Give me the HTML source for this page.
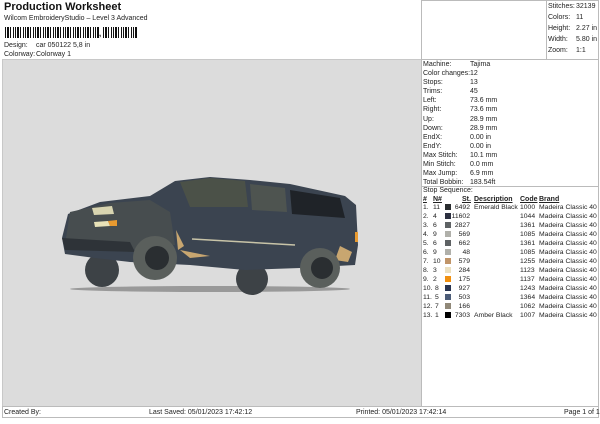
<!DOCTYPE html>
<html><head><meta charset="utf-8"><style>
*{margin:0;padding:0;box-sizing:border-box}
body{width:600px;height:424px;background:#fff;font-family:"Liberation Sans",Arial,sans-serif;font-size:7px;color:#222;position:relative;overflow:hidden}
.a{position:absolute;white-space:nowrap;line-height:9px}
.t{font-weight:bold;font-size:11px;left:4px;top:1px;line-height:13px;color:#111}
.bc{position:absolute;top:27px;height:11px;background:repeating-linear-gradient(90deg,#111 0 1px,#fff 1px 2px,#111 2px 4px,#fff 4px 5px,#111 5px 6px,#fff 6px 8px,#111 8px 9px,#fff 9px 10px)}
.box{position:absolute;border:1px solid #bbb}
.row{position:absolute;left:423px;width:175px;height:9px;line-height:9px;font-size:6.8px}
.row span{position:absolute;white-space:nowrap}
.sw{display:inline-block;width:6px;height:6px;position:absolute;top:1px;left:22px}
</style></head><body>
<div class="a t">Production Worksheet</div>
<div class="a" style="left:4px;top:14px">Wilcom EmbroideryStudio – Level 3 Advanced</div>
<div class="bc" style="left:5px;width:94px"></div>
<div class="a" style="left:99px;top:29px;font-weight:bold;font-size:8px">,</div>
<div class="bc" style="left:103px;width:34px"></div>
<div class="a" style="left:4px;top:41px">Design:</div><div class="a" style="left:36px;top:41px">car 050122 5,8 in</div>
<div class="a" style="left:4px;top:50px">Colorway:</div><div class="a" style="left:36px;top:50px">Colorway 1</div>

<div style="position:absolute;left:2px;top:59px;width:420px;height:348px;background:#dcdcdc;border:1px solid #c8c8c8"></div>
<svg style="position:absolute;left:0;top:0" width="600" height="424">
<ellipse cx="210" cy="289" rx="140" ry="3" fill="#555" opacity=".5"/>
<circle cx="102" cy="270" r="17" fill="#3d4246"/>
<circle cx="252" cy="279" r="16" fill="#3d4246"/>
<path d="M62 238 L68 214 L100 202 L150 196 L175 181 L210 177 L250 180 L290 184 L345 196 L356 205 L358 245 L355 265 L300 268 L245 270 L190 265 L130 262 L95 258 L65 254 Z" fill="#3b4450"/>
<path d="M180 182 L210 178 L245 181 L248 207 L190 207 Z" fill="#4b5148"/>
<path d="M250 184 L285 188 L287 212 L252 210 Z" fill="#4e5450"/>
<path d="M290 190 L340 198 L345 218 L292 214 Z" fill="#1f2328"/>
<path d="M70 212 L110 203 L150 200 L170 212 L175 245 L130 250 L90 245 L66 238 Z" fill="#474d4f"/>
<path d="M92 208 L112 206 L114 214 L94 215 Z" fill="#d8d4b0"/>
<path d="M94 222 L108 221 L110 226 L95 227 Z" fill="#e8e2b8"/>
<path d="M108 221 L117 220 L117 226 L110 226 Z" fill="#e89a30"/>
<path d="M62 238 L130 242 L135 252 L65 250 Z" fill="#2e3338"/>
<path d="M180 250 L210 256 L190 258 Z M176 230 L184 246 L178 250 Z" fill="#c8a670"/>
<path d="M340 246 L352 252 L348 262 L335 260 Z" fill="#c8a670"/>
<line x1="192" y1="239" x2="295" y2="245" stroke="#c8c4a8" stroke-width="1.5"/>
<circle cx="155" cy="258" r="22" fill="#5a5f5c"/><circle cx="157" cy="258" r="12" fill="#2a2e31"/>
<circle cx="320" cy="268" r="20" fill="#5a5f5c"/><circle cx="322" cy="268" r="11" fill="#2a2e31"/>
<rect x="355" y="232" width="3" height="10" fill="#e89a30"/>
</svg>

<div class="box" style="left:421px;top:0;width:178px;height:60px"></div>
<div style="position:absolute;left:546px;top:0;width:1px;height:59px;background:#bbb"></div>
<div class="a" style="left:548px;top:2px">Stitches:</div><div class="a" style="left:576px;top:2px">32139</div>
<div class="a" style="left:548px;top:13px">Colors:</div><div class="a" style="left:576px;top:13px">11</div>
<div class="a" style="left:548px;top:24px">Height:</div><div class="a" style="left:576px;top:24px">2.27 in</div>
<div class="a" style="left:548px;top:35px">Width:</div><div class="a" style="left:576px;top:35px">5.80 in</div>
<div class="a" style="left:548px;top:46px">Zoom:</div><div class="a" style="left:576px;top:46px">1:1</div>

<div class="box" style="left:421px;top:59px;width:178px;height:128px"></div>
<div class="a" style="left:423px;top:60px;line-height:9.1px">Machine:<br>Color changes:<br>Stops:<br>Trims:<br>Left:<br>Right:<br>Up:<br>Down:<br>EndX:<br>EndY:<br>Max Stitch:<br>Min Stitch:<br>Max Jump:<br>Total Bobbin:</div>
<div class="a" style="left:470px;top:60px;line-height:9.1px">Tajima<br>12<br>13<br>45<br>73.6 mm<br>73.6 mm<br>28.9 mm<br>28.9 mm<br>0.00 in<br>0.00 in<br>10.1 mm<br>0.0 mm<br>6.9 mm<br>183.54ft</div>
<div class="box" style="left:421px;top:186px;width:178px;height:221px"></div>
<div class="a" style="left:423px;top:186px">Stop Sequence:</div>
<div class="a" style="left:423px;top:195px;font-weight:bold;text-decoration:underline">#</div>
<div class="a" style="left:433px;top:195px;font-weight:bold;text-decoration:underline">N#</div>
<div class="a" style="left:462px;top:195px;font-weight:bold;text-decoration:underline">St.</div>
<div class="a" style="left:474px;top:195px;font-weight:bold;text-decoration:underline">Description</div>
<div class="a" style="left:520px;top:195px;font-weight:bold;text-decoration:underline">Code</div>
<div class="a" style="left:539px;top:195px;font-weight:bold;text-decoration:underline">Brand</div>
<div class="row" style="top:203px"><span style="left:0">1.</span><span style="left:10px">11</span><i class="sw" style="background:#2a2d2f"></i><span style="right:128px">6492</span><span style="left:51px">Emerald Black</span><span style="left:97px">1000</span><span style="left:116px">Madeira Classic 40</span></div>
<div class="row" style="top:212px"><span style="left:0">2.</span><span style="left:10px">4</span><i class="sw" style="background:#2c3040"></i><span style="right:128px">11602</span><span style="left:97px">1044</span><span style="left:116px">Madeira Classic 40</span></div>
<div class="row" style="top:221px"><span style="left:0">3.</span><span style="left:10px">6</span><i class="sw" style="background:#5e6264"></i><span style="right:128px">2827</span><span style="left:97px">1361</span><span style="left:116px">Madeira Classic 40</span></div>
<div class="row" style="top:230px"><span style="left:0">4.</span><span style="left:10px">9</span><i class="sw" style="background:#b0b0aa"></i><span style="right:128px">569</span><span style="left:97px">1085</span><span style="left:116px">Madeira Classic 40</span></div>
<div class="row" style="top:239px"><span style="left:0">5.</span><span style="left:10px">6</span><i class="sw" style="background:#5e6264"></i><span style="right:128px">662</span><span style="left:97px">1361</span><span style="left:116px">Madeira Classic 40</span></div>
<div class="row" style="top:248px"><span style="left:0">6.</span><span style="left:10px">9</span><i class="sw" style="background:#b0b0aa"></i><span style="right:128px">48</span><span style="left:97px">1085</span><span style="left:116px">Madeira Classic 40</span></div>
<div class="row" style="top:257px"><span style="left:0">7.</span><span style="left:10px">10</span><i class="sw" style="background:#c09468"></i><span style="right:128px">579</span><span style="left:97px">1255</span><span style="left:116px">Madeira Classic 40</span></div>
<div class="row" style="top:266px"><span style="left:0">8.</span><span style="left:10px">3</span><i class="sw" style="background:#ece0c0"></i><span style="right:128px">284</span><span style="left:97px">1123</span><span style="left:116px">Madeira Classic 40</span></div>
<div class="row" style="top:275px"><span style="left:0">9.</span><span style="left:10px">2</span><i class="sw" style="background:#f09010"></i><span style="right:128px">175</span><span style="left:97px">1137</span><span style="left:116px">Madeira Classic 40</span></div>
<div class="row" style="top:284px"><span style="left:0">10.</span><span style="left:12px">8</span><i class="sw" style="background:#283450"></i><span style="right:128px">927</span><span style="left:97px">1243</span><span style="left:116px">Madeira Classic 40</span></div>
<div class="row" style="top:293px"><span style="left:0">11.</span><span style="left:12px">5</span><i class="sw" style="background:#4c5c78"></i><span style="right:128px">503</span><span style="left:97px">1364</span><span style="left:116px">Madeira Classic 40</span></div>
<div class="row" style="top:302px"><span style="left:0">12.</span><span style="left:12px">7</span><i class="sw" style="background:#908878"></i><span style="right:128px">166</span><span style="left:97px">1062</span><span style="left:116px">Madeira Classic 40</span></div>
<div class="row" style="top:311px"><span style="left:0">13.</span><span style="left:12px">1</span><i class="sw" style="background:#000"></i><span style="right:128px">7303</span><span style="left:51px">Amber Black</span><span style="left:97px">1007</span><span style="left:116px">Madeira Classic 40</span></div>

<div class="box" style="left:2px;top:406px;width:597px;height:12px"></div>
<div class="a" style="left:4px;top:408px">Created By:</div>
<div class="a" style="left:149px;top:408px">Last Saved: 05/01/2023 17:42:12</div>
<div class="a" style="left:356px;top:408px">Printed: 05/01/2023 17:42:14</div>
<div class="a" style="left:564px;top:408px">Page 1 of 1</div>
</body></html>
